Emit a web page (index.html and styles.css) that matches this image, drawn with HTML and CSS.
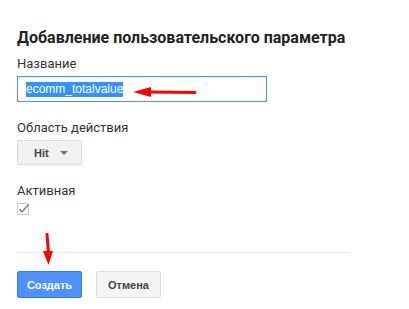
FILE: index.html
```html
<!DOCTYPE html>
<html lang="ru">
<head>
<meta charset="utf-8">
<link rel="stylesheet" href="styles.css">
</head>
<body>
<div class="dialog">
  <h1 class="title">Добавление пользовательского параметра</h1>
  <div class="field">
    <label class="label">Название</label>
    <div class="input-row">
      <div class="input"><span class="sel">ecomm_totalvalue</span></div>
      <svg class="arrow-left" width="70" height="12" viewBox="0 0 70 12">
        <path d="M64 6.5 L18 6" stroke="#f00" stroke-width="3" stroke-linecap="round"/>
        <path d="M2 6 L20 1 L20 11 Z" fill="#f00"/>
      </svg>
    </div>
  </div>
  <div class="field scope">
    <label class="label">Область действия</label>
    <div class="select"><span>Hit</span><span class="caret"></span></div>
  </div>
  <div class="field active">
    <label class="label">Активная</label>
    <svg class="check" width="13" height="12" viewBox="0 0 13 12">
      <rect x="0.5" y="0.5" width="11" height="11" fill="#fff" stroke="#c6c6c6"/>
      <path d="M2.5 6 L5 8.8 L11.5 1.5" fill="none" stroke="#8a8a8a" stroke-width="1.6"/>
    </svg>
  </div>
  <div class="footer">
    <svg class="arrow-down" width="14" height="34" viewBox="0 0 14 34">
      <path d="M6 1 L7.5 20" stroke="#f00" stroke-width="3" stroke-linecap="round"/>
      <path d="M2 18 L12 18 L7.5 32 Z" fill="#f00"/>
    </svg>
    <div class="buttons">
      <button class="btn primary">Создать</button>
      <button class="btn">Отмена</button>
    </div>
  </div>
</div>
</body>
</html>
```
FILE: styles.css
```css
html, body {
  margin: 0;
  padding: 0;
  background: #fff;
}
body {
  font-family: Roboto, "Liberation Sans", Arial, sans-serif;
  color: #222;
}
.dialog {
  padding: 28px 0 0 17px;
  width: 333px;
}
.title {
  margin: 0;
  font-family: Roboto, "Liberation Sans", sans-serif;
  font-weight: 700;
  font-size: 16px;
  line-height: 20px;
  color: #222;
  white-space: nowrap;
}
.field {
  display: flex;
  flex-direction: column;
}
.label {
  font-size: 13px;
  line-height: 16px;
  color: #333;
  margin-top: 8px;
  margin-bottom: 4px;
}
.input-row {
  display: flex;
  align-items: center;
  position: relative;
}
.input {
  box-sizing: border-box;
  width: 250px;
  height: 26px;
  border: 1px solid #4d90fe;
  box-shadow: inset 0 1px 2px rgba(0,0,0,0.1);
  padding: 5px 0 0 8px;
  font-family: "Liberation Sans", Arial, sans-serif;
  font-size: 12px;
  line-height: 14px;
  color: #fff;
}
.sel {
  background: #3390ff;
  padding: 0 0 1px 0;
}
.arrow-left {
  position: absolute;
  left: 114px;
  top: 10px;
}
.scope {
  margin-top: 10px;
}
.select {
  box-sizing: border-box;
  width: 65px;
  height: 25px;
  border: 1px solid #dcdcdc;
  border-radius: 2px;
  background: #f1f1f1;
  display: flex;
  align-items: center;
  padding-left: 16px;
  gap: 11px;
  font-family: "Liberation Sans", Arial, sans-serif;
  font-weight: 700;
  font-size: 11px;
  color: #444;
}
.caret {
  width: 0;
  height: 0;
  border-left: 4px solid transparent;
  border-right: 4px solid transparent;
  border-top: 4px solid #777;
  margin-top: 1px;
}
.active {
  margin-top: 10px;
}
.check {
  margin-top: 0;
}
.footer {
  position: relative;
  margin-top: 37px;
  border-top: 1px solid #e5e5e5;
  padding-top: 18px;
}
.arrow-down {
  position: absolute;
  left: 24px;
  top: -20px;
}
.buttons {
  display: flex;
  gap: 14px;
}
.btn {
  box-sizing: border-box;
  width: 65px;
  height: 27px;
  border: 1px solid #dcdcdc;
  border-radius: 2px;
  background: #f5f5f5;
  font-family: "Liberation Sans", Arial, sans-serif;
  font-weight: 700;
  font-size: 11px;
  color: #444;
  padding: 0;
}
.btn.primary {
  background: #4d90fe;
  border-color: #3079ed;
  color: #fff;
}
```
